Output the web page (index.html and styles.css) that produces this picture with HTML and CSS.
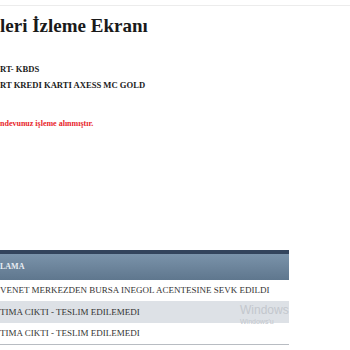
FILE: index.html
```html
<!DOCTYPE html>
<html lang="tr">
<head>
<meta charset="utf-8">
<link rel="stylesheet" href="styles.css">
</head>
<body>
<div class="page">
  <div class="topline"></div>
  <h1 class="title">leri İzleme Ekranı</h1>
  <div class="info">
    <div class="info-line">RT- KBDS</div>
    <div class="info-line">RT KREDI KARTI AXESS MC GOLD</div>
  </div>
  <div class="notice">ndevunuz işleme alınmıştır.</div>
  <div class="table">
    <div class="thead">LAMA</div>
    <div class="row first">VENET MERKEZDEN BURSA INEGOL ACENTESINE SEVK EDILDI</div>
    <div class="row alt">TIMA CIKTI - TESLIM EDILEMEDI</div>
    <div class="row last">TIMA CIKTI - TESLIM EDILEMEDI</div>
    <div class="watermark">
      <div class="wm-big">Windows</div>
      <div class="wm-small">Windows'u</div>
    </div>
  </div>
</div>
</body>
</html>
```
FILE: styles.css
```css
html, body {
  margin: 0;
  padding: 0;
  background: #ffffff;
}
.page {
  font-family: "Liberation Serif", "Times New Roman", serif;
  color: #222;
  width: 350px;
  overflow: hidden;
}
.topline {
  height: 1px;
  background: #ececec;
  margin-top: 5px;
}
.title {
  margin: 9px 0 0 0;
  font-size: 19px;
  line-height: 22px;
  font-weight: bold;
  color: #1a1a1a;
}
.info {
  margin-top: 24px;
}
.info-line {
  font-size: 8.6px;
  font-weight: bold;
  line-height: 16px;
  color: #1a1a1a;
}
.notice {
  margin-top: 24px;
  font-size: 8px;
  font-weight: bold;
  color: #e8252b;
  line-height: 14px;
}
.table {
  position: relative;
  width: 289px;
  margin-top: 119px;
}
.thead {
  height: 26px;
  border-top: 4px solid #33445c;
  background: linear-gradient(#7a93aa, #6a8299 60%, #5f778e);
  color: #e9eef3;
  font-size: 8px;
  font-weight: bold;
  line-height: 26px;
}
.row {
  font-size: 9px;
  line-height: 22px;
  height: 22px;
  color: #333;
}
.row.first {
  height: 21px;
  line-height: 21px;
}
.row.alt {
  background: #dde1e6;
}
.row.last {
  height: 21px;
  line-height: 21px;
  border-bottom: 1px solid #b8bcc2;
}
.watermark {
  position: absolute;
  left: 240px;
  top: 53px;
  font-family: "Liberation Sans", "DejaVu Sans", sans-serif;
  color: #c3c7cd;
  white-space: nowrap;
}
.wm-big {
  font-size: 12px;
  line-height: 14px;
}
.wm-small {
  font-size: 7px;
  line-height: 10px;
}
```
